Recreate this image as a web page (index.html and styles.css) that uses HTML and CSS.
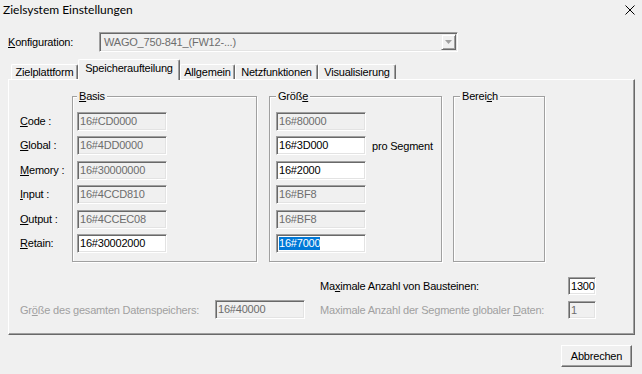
FILE: index.html
```html
<!DOCTYPE html>
<html lang="de">
<head>
<meta charset="utf-8">
<title>Zielsystem Einstellungen</title>
<link rel="stylesheet" href="styles.css">
</head>
<body>
<div class="window">
  <div class="titlebar">
    <span class="title">Zielsystem Einstellungen</span>
    <svg class="close" width="10" height="10" viewBox="0 0 10 10"><path d="M0.5 0.5 L9.5 9.5 M9.5 0.5 L0.5 9.5" stroke="#000" stroke-width="1" fill="none"/></svg>
  </div>

  <div class="config-row">
    <span class="config-label"><u>K</u>onfiguration:</span>
    <div class="combo">
      <span class="combo-text">WAGO_750-841_(FW12-...)</span>
      <span class="combo-btn"><svg width="7" height="4" viewBox="0 0 7 4"><path d="M0 0 H7 L3.5 4 Z" fill="#a0a0a0"/></svg></span>
    </div>
  </div>

  <div class="tabs">
    <div class="tab t-ziel">Zielplattform</div>
    <div class="tab selected t-speicher">Speicheraufteilung</div>
    <div class="tab t-allg">Allgemein</div>
    <div class="tab t-netz">Netzfunktionen</div>
    <div class="tab t-visu">Visualisierung</div>
  </div>

  <div class="panel">
    <div class="groups">
      <div class="labels">
        <div class="lab"><u>C</u>ode :</div>
        <div class="lab"><u>G</u>lobal :</div>
        <div class="lab"><u>M</u>emory :</div>
        <div class="lab"><u>I</u>nput :</div>
        <div class="lab"><u>O</u>utput :</div>
        <div class="lab"><u>R</u>etain:</div>
      </div>

      <div class="group basis">
        <span class="legend"><u>B</u>asis</span>
        <div class="rows">
          <div class="field">16#CD0000</div>
          <div class="field">16#4DD0000</div>
          <div class="field">16#30000000</div>
          <div class="field">16#4CCD810</div>
          <div class="field">16#4CCEC08</div>
          <div class="field on">16#30002000</div>
        </div>
      </div>

      <div class="group groesse">
        <span class="legend">Größ<u>e</u></span>
        <div class="rows">
          <div class="field">16#80000</div>
          <div class="row-line"><div class="field on">16#3D000</div><span class="note">pro Segment</span></div>
          <div class="field on">16#2000</div>
          <div class="field">16#BF8</div>
          <div class="field">16#BF8</div>
          <div class="field on"><span class="sel">16#7000</span></div>
        </div>
      </div>

      <div class="group bereich">
        <span class="legend">Berei<u>c</u>h</span>
      </div>
    </div>

    <div class="bottom">
      <span class="blabel r1">Ma<u>x</u>imale Anzahl von Bausteinen:</span>
      <div class="field small on r1f">1300</div>
      <span class="blabel dis l2">Gr<u>ö</u>ße des gesamten Datenspeichers:</span>
      <div class="field l2f">16#40000</div>
      <span class="blabel dis r2">Maximale Anzahl der Segmente globaler <u>D</u>aten:</span>
      <div class="field small r2f">1</div>
    </div>
  </div>

  <div class="footer">
    <button class="btn" type="button">Abbrechen</button>
  </div>
</div>
</body>
</html>
```

FILE: styles.css
```css
html, body {
  margin: 0;
  padding: 0;
  background: #f0f0f0;
}

body {
  font-family: "Liberation Sans", Arial, sans-serif;
  font-size: 11px;
  letter-spacing: -0.2px;
  color: #000;
}

u {
  text-decoration: underline;
  text-underline-offset: 1px;
}

.window {
  width: 642px;
  height: 374px;
  background: #f0f0f0;
  display: flex;
  flex-direction: column;
  overflow: hidden;
}

.titlebar {
  height: 19px;
  display: flex;
  align-items: center;
  justify-content: space-between;
  padding: 0 7px 0 3px;
}

.title {
  font-family: Lato, "Liberation Sans", sans-serif;
  font-size: 12px;
  letter-spacing: 0;
  color: #000;
}

.close {
  display: block;
}

.config-row {
  display: flex;
  align-items: center;
  margin-top: 13px;
  padding-left: 8px;
  height: 20px;
}

.config-label {
  width: 91px;
}

.combo {
  width: 359px;
  height: 20px;
  box-sizing: border-box;
  border-top: 1px solid #a0a0a0;
  border-left: 1px solid #a0a0a0;
  border-right: 1px solid #fff;
  border-bottom: 1px solid #fff;
  box-shadow: inset 1px 1px #696969, inset -1px -1px #e3e3e3;
  display: flex;
  align-items: center;
  justify-content: space-between;
  padding: 1px 1px 1px 4px;
  color: #6d6d6d;
  background: #f0f0f0;
}

.combo-btn {
  width: 15px;
  height: 16px;
  box-sizing: border-box;
  border-top: 1px solid #f0f0f0;
  border-left: 1px solid #f0f0f0;
  border-right: 1px solid #696969;
  border-bottom: 1px solid #696969;
  box-shadow: inset 1px 1px #fff, inset -1px -1px #a0a0a0;
  display: flex;
  align-items: center;
  justify-content: center;
  background: #f0f0f0;
}

.combo-btn svg {
  display: block;
}

.tabs {
  display: flex;
  align-items: flex-end;
  margin-top: 7px;
  height: 20px;
  padding-left: 11px;
}

.tab {
  height: 15px;
  box-sizing: border-box;
  line-height: 14px;
  padding: 0;
  text-align: center;
  border-top: 1px solid #fff;
  border-left: 1px solid #fff;
  border-right: 1px solid #696969;
  box-shadow: inset -1px 0 #a0a0a0;
  border-radius: 2px 2px 0 0;
  background: #f0f0f0;
  white-space: nowrap;
}

.tab.selected {
  height: 21px;
  line-height: 17px;
  padding-bottom: 3px;
  margin-bottom: -1px;
  position: relative;
  z-index: 1;
}

.t-ziel { width: 67px; }
.t-speicher { width: 102px; }
.t-allg { width: 55px; }
.t-netz { width: 83px; }
.t-visu { width: 78px; }

.panel {
  margin-left: 8px;
  width: 627px;
  height: 256px;
  box-sizing: border-box;
  border-top: 1px solid #fff;
  border-left: 1px solid #fff;
  border-right: 1px solid #696969;
  border-bottom: 1px solid #696969;
  box-shadow: inset -1px -1px #a0a0a0;
  padding: 16px 0 0 11px;
}

.groups {
  display: flex;
  align-items: flex-start;
}

.labels {
  width: 52px;
  padding-top: 16px;
  display: flex;
  flex-direction: column;
  gap: 5.4px;
}

.lab {
  height: 19px;
  line-height: 19px;
}

.group {
  position: relative;
  height: 166px;
  box-sizing: border-box;
  border: 1px solid #a0a0a0;
  box-shadow: inset 1px 1px #fff, 1px 1px #fff;
}

.basis {
  width: 185px;
  margin-right: 12px;
}

.groesse {
  width: 173px;
  margin-right: 11px;
}

.bereich {
  width: 92px;
}

.legend {
  position: absolute;
  top: -7px;
  left: 6px;
  padding: 0 2px;
  line-height: 13px;
  background: #f0f0f0;
}

.basis .legend {
  left: 4px;
}

.rows {
  display: flex;
  flex-direction: column;
  align-items: flex-start;
  gap: 5.4px;
  padding: 15px 0 0 4px;
}

.groesse .rows {
  padding-left: 6px;
}

.row-line {
  display: flex;
  align-items: center;
  gap: 6px;
}

.field {
  width: 90px;
  height: 19px;
  box-sizing: border-box;
  border-top: 1px solid #a0a0a0;
  border-left: 1px solid #a0a0a0;
  border-right: 1px solid #fff;
  border-bottom: 1px solid #fff;
  box-shadow: inset 1px 1px #696969, inset -1px -1px #e3e3e3;
  padding-left: 2px;
  line-height: 17px;
  color: #6d6d6d;
  background: #f0f0f0;
  white-space: nowrap;
  overflow: hidden;
}

.field.on {
  background: #fff;
  color: #000;
}

.field.small {
  width: 28px;
  height: 18px;
  line-height: 16px;
}

.sel {
  display: inline-block;
  background: #0078d7;
  color: #fff;
  line-height: 13px;
  vertical-align: middle;
  margin-top: -2px;
}

.note {
  white-space: nowrap;
}

.bottom {
  margin-top: 15px;
  display: grid;
  grid-template-columns: 195px 90px 15px 248px 28px;
  grid-template-rows: 18px 19px;
  row-gap: 5px;
  align-items: center;
}

.blabel {
  white-space: nowrap;
}

.blabel.dis {
  color: #a0a0a0;
}

.r1 { grid-column: 4; grid-row: 1; }
.r1f { grid-column: 5; grid-row: 1; }
.l2 { grid-column: 1; grid-row: 2; }
.l2f { grid-column: 2; grid-row: 2; }
.r2 { grid-column: 4; grid-row: 2; }
.r2f { grid-column: 5; grid-row: 2; }

.footer {
  display: flex;
  justify-content: flex-end;
  margin-top: 10px;
  padding-right: 10px;
}

.btn {
  width: 71px;
  height: 22px;
  box-sizing: border-box;
  margin: 0;
  padding: 0;
  font-family: "Liberation Sans", Arial, sans-serif;
  font-size: 11px;
  letter-spacing: -0.2px;
  color: #000;
  background: #f0f0f0;
  border-top: 1px solid #fff;
  border-left: 1px solid #fff;
  border-right: 1px solid #696969;
  border-bottom: 1px solid #696969;
  box-shadow: inset -1px -1px #a0a0a0;
  border-radius: 0;
}
```
